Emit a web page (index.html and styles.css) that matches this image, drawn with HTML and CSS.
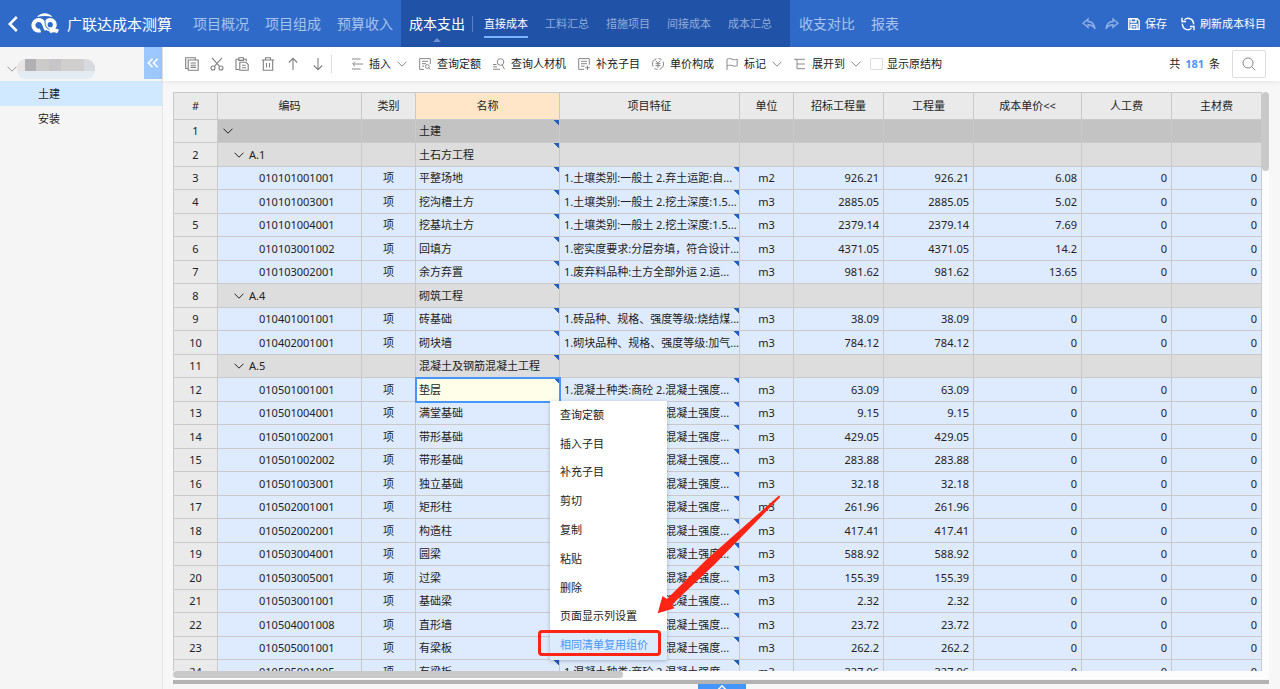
FILE: index.html
```html
<!DOCTYPE html>
<html lang="zh-CN">
<head>
<meta charset="utf-8">
<title>广联达成本测算</title>
<link rel="stylesheet" href="styles.css">
</head>
<body>
<svg class="defs" aria-hidden="true">
  <symbol id="i-down" viewBox="0 0 10 6"><path d="M.5.7 5 5.2 9.500.7"/></symbol>
  <symbol id="i-copy" viewBox="0 0 14 14"><path d="M3 11.500H.7V.7h9.600v1.800M3.200 3h10v10.300h-10zM5.500 6h5.500M5.500 8.200h5.500M5.500 10.400h5.500"/></symbol>
  <symbol id="i-cut" viewBox="0 0 14 14"><path d="M2 .8l8 9M12 .8l-8 9"/><circle cx="3" cy="11" r="2"/><circle cx="11" cy="11" r="2"/></symbol>
  <symbol id="i-paste" viewBox="0 0 14 14"><path d="M4 12.500H1V2.200h2.800M8.500 2.200h2.800v2M3.800.8h4.700v2.600H3.800zM4.800 5.200h6l2.400 2.300v5.800H4.800zM7 8.300h3.600M7 10.700h4"/></symbol>
  <symbol id="i-trash" viewBox="0 0 14 14"><path d="M.8 3h12.400M4.500 3V.8h5V3M2.300 3v10.200h9.400V3M5.500 6v4.500M8.500 6v4.500"/></symbol>
  <symbol id="i-up" viewBox="0 0 14 14"><path d="M7 13V1.500M2.800 5.500 7 1.300l4.200 4.200"/></symbol>
  <symbol id="i-dn" viewBox="0 0 14 14"><path d="M7 1v11.500M2.800 8.500 7 12.700l4.200-4.200"/></symbol>
  <symbol id="i-insert" viewBox="0 0 12 12"><path d="M1 1h8.500M5 6h7M1 11h8.500M5 6H2M4 3.700 1.700 6 4 8.300"/></symbol>
  <symbol id="i-list" viewBox="0 0 12 12"><path d="M5 11.400H.7V.6h10.600V6M3 3.300h6M3 5.700h4M3 8.100h2"/><circle cx="8.300" cy="8.500" r="1.900"/><path d="M9.700 9.900l1.800 1.800"/></symbol>
  <symbol id="i-person" viewBox="0 0 12 12"><circle cx="7.500" cy="4" r="3.300"/><path d="M9.200 7l2.300 4.300M0 6.500h3.500M0 8.900h4M0 11.300h7"/></symbol>
  <symbol id="i-add" viewBox="0 0 12 12"><path d="M6 11.400H.7V.6h10.600v6.200M3 3.300h6M3 5.700h6M3 8.100h3.500M9.500 7.500v4.500M7.200 9.700h4.600"/></symbol>
  <symbol id="i-yen" viewBox="0 0 12 12"><path d="M4.500.700A5.500 5.500 0 0 0 1 8.500M2.300 10.200A5.500 5.500 0 0 0 5.500 11.500M7.500 11.300A5.500 5.500 0 0 0 11 3.500M9.700 1.800A5.500 5.500 0 0 0 6.500.5M3.700 2.700 6 5.300l2.300-2.600M3.500 5.700h5M3.500 7.600h5M6 5.500V9.800"/></symbol>
  <symbol id="i-flag" viewBox="0 0 12 12"><path d="M1 12V1.300C3 .2 4.500.500 6 1.200s3 .8 5.200.1v6.400C9 8.400 7.500 8.200 6 7.600S3 7 1 8"/></symbol>
  <symbol id="i-tree" viewBox="0 0 12 12"><path d="M0 1.300h11M3 1.300v9.400h8M3 6h8"/></symbol>
  <symbol id="i-search" viewBox="0 0 14 14"><circle cx="6" cy="6" r="5"/><path d="M9.600 9.600l3.700 3.700"/></symbol>
  <symbol id="i-undo" viewBox="0 0 14 12"><path d="M6 1 1 5.200 6 9.300V6.800c3 0 5.300.9 7 4C12.500 6 10 3.700 6 3.500z"/></symbol>
  <symbol id="i-save" viewBox="0 0 12 12"><path d="M.8.8h8.400l2 2v8.400H.8zM3 .8v3.200h5V.8M3 11V6.500h6V11M4.500 8.700h3"/></symbol>
  <symbol id="i-refresh" viewBox="0 0 14 14"><path d="M3.500 2.800a5.400 5.400 0 0 1 9 4.600M10.500 11.200a5.400 5.400 0 0 1-9-4.600M1 .8v3.700h4M13 13.200V9.500H9"/></symbol>
</svg>

<div class="app">
<header class="topbar">
  <button class="back" aria-label="返回"><svg viewBox="0 0 10 16"><path d="M8.800 1 1.800 8l7 7"/></svg></button>
  <svg class="logo" viewBox="0 0 28 21" aria-hidden="true">
    <path class="fill" d="M6 4C10-.9 17.500-1 21.500 4 16.500 2.500 11 2.500 6 4z"/>
    <path d="M9.500 17.300A5.300 5.300 0 1 1 12.300 9.600C13.500 11.500 13.800 14 15.500 16.800"/>
    <circle cx="19.200" cy="11.700" r="4.600"/>
    <path d="M18.500 18.600C21.500 16.800 24 16.800 27 18.600"/>
    <path class="gap" d="M14.300 7.500C13.500 11 14.800 15.500 18.500 16.300"/>
  </svg>
  <h1>广联达成本测算</h1>
  <nav class="nav">
    <a href="#">项目概况</a><a href="#">项目组成</a><a href="#">预算收入</a>
    <div class="nav-open">
      <a class="current" href="#">成本支出</a>
      <div class="subnav"><a class="on" href="#">直接成本</a><a href="#">工料汇总</a><a href="#">措施项目</a><a href="#">间接成本</a><a href="#">成本汇总</a></div>
    </div>
    <a href="#">收支对比</a><a href="#">报表</a>
  </nav>
  <div class="actions">
    <button class="dim" aria-label="撤销"><svg class="ic14"><use href="#i-undo"/></svg></button>
    <button class="dim flip" aria-label="重做"><svg class="ic14"><use href="#i-undo"/></svg></button>
    <button><svg class="ic12"><use href="#i-save"/></svg>保存</button>
    <button class="refresh"><svg class="ic14"><use href="#i-refresh"/></svg>刷新成本科目</button>
  </div>
</header>

<div class="body">
  <aside class="side">
    <div class="side-head">
      <button class="project" aria-label="项目"><svg class="chev"><use href="#i-down"/></svg><span class="mosaic"></span></button>
      <button class="fold" aria-label="收起"><svg viewBox="0 0 12 10"><path d="M5.500.8 1.300 5l4.200 4.200M10.700.8 6.500 5l4.200 4.200"/></svg></button>
    </div>
    <a class="leaf on" href="#">土建</a>
    <a class="leaf" href="#">安装</a>
  </aside>

  <main class="main">
    <div class="toolbar">
      <div class="icons">
        <button aria-label="复制"><svg><use href="#i-copy"/></svg></button>
        <button aria-label="剪切"><svg><use href="#i-cut"/></svg></button>
        <button aria-label="粘贴"><svg><use href="#i-paste"/></svg></button>
        <button aria-label="删除"><svg><use href="#i-trash"/></svg></button>
        <button aria-label="上移"><svg><use href="#i-up"/></svg></button>
        <button aria-label="下移"><svg><use href="#i-dn"/></svg></button>
      </div>
      <div class="tools">
        <button><svg class="ic12"><use href="#i-insert"/></svg>插入<svg class="chev"><use href="#i-down"/></svg></button>
        <button><svg class="ic12"><use href="#i-list"/></svg>查询定额</button>
        <button><svg class="ic12"><use href="#i-person"/></svg>查询人材机</button>
        <button><svg class="ic12"><use href="#i-add"/></svg>补充子目</button>
        <button><svg class="ic12"><use href="#i-yen"/></svg>单价构成</button>
        <button><svg class="ic12"><use href="#i-flag"/></svg>标记<svg class="chev"><use href="#i-down"/></svg></button>
        <button><svg class="ic12"><use href="#i-tree"/></svg>展开到<svg class="chev"><use href="#i-down"/></svg></button>
        <label><input type="checkbox">显示原结构</label>
      </div>
      <p class="count">共 <b>181</b> 条</p>
      <button class="search" aria-label="搜索"><svg class="ic14"><use href="#i-search"/></svg></button>
    </div>

    <div class="sheet">
      <div class="viewport">
        <table class="grid">
          <colgroup><col class="c-no"><col class="c-name"><col class="c-unit"><col class="c-name"><col class="c-desc"><col class="c-unit"><col class="c-num"><col class="c-num"><col class="c-price"><col class="c-num"><col class="c-num"></colgroup>
          <thead><tr><th>#</th><th>编码</th><th>类别</th><th class="hot">名称</th><th>项目特征</th><th>单位</th><th>招标工程量</th><th>工程量</th><th>成本单价&lt;&lt;</th><th>人工费</th><th>主材费</th></tr></thead>
          <tbody>
          <tr class="top"><th>1<td><svg class="chev"><use href="#i-down"/></svg><td><td>土建<td><td><td><td><td><td><td></tr>
          <tr class="group"><th>2<td><svg class="chev"><use href="#i-down"/></svg>A.1<td><td>土石方工程<td><td><td><td><td><td><td></tr>
          <tr><th>3<td>010101001001<td>项<td>平整场地<td>1.土壤类别:一般土 2.弃土运距:自...<td>m2<td>926.21<td>926.21<td>6.08<td>0<td>0</tr>
          <tr><th>4<td>010101003001<td>项<td>挖沟槽土方<td>1.土壤类别:一般土 2.挖土深度:1.5...<td>m3<td>2885.05<td>2885.05<td>5.02<td>0<td>0</tr>
          <tr><th>5<td>010101004001<td>项<td>挖基坑土方<td>1.土壤类别:一般土 2.挖土深度:1.5...<td>m3<td>2379.14<td>2379.14<td>7.69<td>0<td>0</tr>
          <tr><th>6<td>010103001002<td>项<td>回填方<td>1.密实度要求:分层夯填，符合设计...<td>m3<td>4371.05<td>4371.05<td>14.2<td>0<td>0</tr>
          <tr><th>7<td>010103002001<td>项<td>余方弃置<td>1.废弃料品种:土方全部外运 2.运...<td>m3<td>981.62<td>981.62<td>13.65<td>0<td>0</tr>
          <tr class="group"><th>8<td><svg class="chev"><use href="#i-down"/></svg>A.4<td><td>砌筑工程<td><td><td><td><td><td><td></tr>
          <tr><th>9<td>010401001001<td>项<td>砖基础<td>1.砖品种、规格、强度等级:烧结煤...<td>m3<td>38.09<td>38.09<td>0<td>0<td>0</tr>
          <tr><th>10<td>010402001001<td>项<td>砌块墙<td>1.砌块品种、规格、强度等级:加气...<td>m3<td>784.12<td>784.12<td>0<td>0<td>0</tr>
          <tr class="group"><th>11<td><svg class="chev"><use href="#i-down"/></svg>A.5<td><td>混凝土及钢筋混凝土工程<td><td><td><td><td><td><td></tr>
          <tr><th>12<td>010501001001<td>项<td class="editing">垫层<td>1.混凝土种类:商砼 2.混凝土强度...<td>m3<td>63.09<td>63.09<td>0<td>0<td>0</tr>
          <tr><th>13<td>010501004001<td>项<td>满堂基础<td>1.混凝土种类:商砼 2.混凝土强度...<td>m3<td>9.15<td>9.15<td>0<td>0<td>0</tr>
          <tr><th>14<td>010501002001<td>项<td>带形基础<td>1.混凝土种类:商砼 2.混凝土强度...<td>m3<td>429.05<td>429.05<td>0<td>0<td>0</tr>
          <tr><th>15<td>010501002002<td>项<td>带形基础<td>1.混凝土种类:商砼 2.混凝土强度...<td>m3<td>283.88<td>283.88<td>0<td>0<td>0</tr>
          <tr><th>16<td>010501003001<td>项<td>独立基础<td>1.混凝土种类:商砼 2.混凝土强度...<td>m3<td>32.18<td>32.18<td>0<td>0<td>0</tr>
          <tr><th>17<td>010502001001<td>项<td>矩形柱<td>1.混凝土种类:商砼 2.混凝土强度...<td>m3<td>261.96<td>261.96<td>0<td>0<td>0</tr>
          <tr><th>18<td>010502002001<td>项<td>构造柱<td>1.混凝土种类:商砼 2.混凝土强度...<td>m3<td>417.41<td>417.41<td>0<td>0<td>0</tr>
          <tr><th>19<td>010503004001<td>项<td>圆梁<td>1.混凝土种类:商砼 2.混凝土强度...<td>m3<td>588.92<td>588.92<td>0<td>0<td>0</tr>
          <tr><th>20<td>010503005001<td>项<td>过梁<td>1.混凝土种类:商砼 2.混凝土强度...<td>m3<td>155.39<td>155.39<td>0<td>0<td>0</tr>
          <tr><th>21<td>010503001001<td>项<td>基础梁<td>1.混凝土种类:商砼 2.混凝土强度...<td>m3<td>2.32<td>2.32<td>0<td>0<td>0</tr>
          <tr><th>22<td>010504001008<td>项<td>直形墙<td>1.混凝土种类:商砼 2.混凝土强度...<td>m3<td>23.72<td>23.72<td>0<td>0<td>0</tr>
          <tr><th>23<td>010505001001<td>项<td>有梁板<td>1.混凝土种类:商砼 2.混凝土强度...<td>m3<td>262.2<td>262.2<td>0<td>0<td>0</tr>
          <tr><th>24<td>010505001005<td>项<td>有梁板<td>1.混凝土种类:商砼 2.混凝土强度...<td>m3<td>327.96<td>327.96<td>0<td>0<td>0</tr>
          </tbody>
        </table>
      </div>
      <div class="vbar"><i></i></div>
      <div class="hbar"><i></i></div>
    </div>
    <div class="splitter"></div>
    <button class="drawer" aria-label="展开"><svg class="chev"><use href="#i-down"/></svg></button>
  </main>
</div>

<div class="menu" role="menu">
  <button role="menuitem">查询定额</button>
  <button role="menuitem">插入子目</button>
  <button role="menuitem">补充子目</button>
  <button role="menuitem">剪切</button>
  <button role="menuitem">复制</button>
  <button role="menuitem">粘贴</button>
  <button role="menuitem">删除</button>
  <button role="menuitem">页面显示列设置</button>
  <button role="menuitem" class="on">相同清单复用组价</button>
</div>
<div class="mark-box"></div>
<svg class="mark-arrow" viewBox="0 0 124 120" aria-hidden="true"><path d="M.7 119.300 5.500 102l4.500 3L49 66 121.500 2a1 1 0 0 1 1.500 1.200L57 71 15 110.500l2.500 3.800z"/></svg>
</div>
</body>
</html>
```

FILE: styles.css
```css
* { box-sizing: border-box; }
body {
  margin: 0;
  font: 11px/16px "Noto Sans", "Noto Sans CJK SC", sans-serif;
  color: #222;
  background: #f7f7f7;
}
button { font: inherit; color: inherit; background: none; border: 0; padding: 0; }
a { color: inherit; text-decoration: none; }
svg { display: block; fill: none; stroke: currentColor; flex: none; }
.defs { position: absolute; width: 0; height: 0; }
.ic12 { width: 12px; height: 12px; }
.ic14 { width: 14px; height: 14px; }
.chev { width: 10px; height: 6px; }

.app { position: relative; display: flex; flex-direction: column; height: 100vh; overflow: hidden; }

/* top bar */
.topbar { display: flex; align-items: center; flex: none; height: 47px; padding: 0 14px 0 8px; background: #306ac9; color: #fff; }
.back svg { width: 10px; height: 16px; stroke-width: 2.5; }
.logo { width: 28px; height: 21px; margin-left: 13px; stroke-width: 4; }
.logo .fill { fill: #fff; stroke: none; }
.logo .gap { stroke: #306ac9; stroke-width: 1; }
h1 { margin: 0 0 0 8px; font-size: 15px; font-weight: 400; line-height: 24px; white-space: nowrap; }
.nav { display: flex; align-items: center; align-self: stretch; margin-left: 13px; font-size: 14px; white-space: nowrap; color: #a7c2eb; }
.nav > a { padding: 0 8px; }
.nav-open { display: flex; align-items: center; align-self: stretch; margin-right: 1px; padding: 0 18px 0 8px; background: #2052a7; }
.current { position: relative; color: #fff; padding-right: 7px; }
.current::after { content: ""; position: absolute; left: 24px; top: 22px; border: 4px solid transparent; border-top: 0; border-bottom-color: #6f93cf; }
.subnav { display: flex; gap: 17px; padding-left: 11px; border-left: 1px solid #5b82c2; font-size: 11px; color: #92addb; }
.subnav a { position: relative; }
.subnav .on { color: #fff; }
.subnav .on::after { content: ""; position: absolute; left: 0; right: 0; top: 20px; height: 2px; background: #79b5ff; }
.actions { display: flex; align-items: center; gap: 9px; margin-left: auto; }
.actions button { display: flex; align-items: center; gap: 5px; white-space: nowrap; }
.actions .dim { color: #8fb0e5; }
.actions .flip { transform: scaleX(-1); }
.actions .refresh { margin-left: 5px; }
.actions svg { stroke-width: 1.4; }

/* side tree */
.body { display: flex; flex: 1; min-height: 0; }
.side { width: 163px; flex: none; background: #f5f5f5; border-right: 1px solid #e4e4e4; }
.side-head { display: flex; justify-content: space-between; height: 34px; }
.project { display: flex; align-items: center; padding: 10px 0 0 7px; color: #999; }
.mosaic {
  width: 78px; height: 20px; border-radius: 9px;
  background:
    linear-gradient(#0000 60%, #e3ebf3 60%),
    linear-gradient(90deg, #e8e4e3 10%, #b0b0b3 10% 25%, #cccbc9 25% 41%, #c8c5c9 41% 56%, #d0cfce 56% 86%, #d7dade 86%);
}
.fold { display: flex; align-items: center; justify-content: center; width: 18px; height: 32px; background: #9cc8ff; color: #fff; }
.fold svg { width: 12px; height: 10px; stroke-width: 1.6; }
.leaf { display: block; padding-left: 38px; line-height: 25px; }
.leaf.on { background: #d1e9ff; }

/* toolbar */
.main { display: flex; flex-direction: column; flex: 1; min-width: 0; }
.toolbar { display: flex; align-items: center; flex: none; height: 34px; padding: 0 14px 0 22px; background: #fff; box-shadow: 0 1px 5px rgba(0, 0, 0, .08); white-space: nowrap; }
.icons { display: flex; justify-content: space-between; align-items: center; width: 147px; height: 18px; padding-right: 6px; border-right: 1px solid #ddd; color: #808080; }
.icons svg { width: 14px; height: 14px; stroke-width: 1.1; }
.tools { display: flex; gap: 12px; margin-left: 19px; }
.tools button, .tools label { display: flex; align-items: center; gap: 6px; }
.tools svg { color: #888; }
.tools label { gap: 4px; margin-left: -3px; }
.tools input { appearance: none; width: 13px; height: 12px; margin: 0; border: 1px solid #ddd; border-radius: 1px; background: #fff; }
.count { margin: 0 12px 0 auto; }
.count b { margin: 0 2px; color: #4797f7; }
.search { display: flex; align-items: center; justify-content: center; width: 34px; height: 28px; border: 1px solid #ddd; border-radius: 2px; color: #888; }

/* data grid */
.sheet { display: grid; grid-template: minmax(0, 1fr) 8px / minmax(0, 1fr) 7px; flex: 1; min-height: 0; margin: 11px 11px 0 10px; background: #fcfcfc; }
.viewport { overflow: hidden; }
.grid { width: 100%; table-layout: fixed; border-spacing: 0; border: solid #c9c9c9; border-width: 1px 0 0 1px; }
.c-no { width: 44px; }
.c-name { width: 144px; }
.c-unit { width: 54px; }
.c-desc { width: 180px; }
.c-num { width: 90px; }
.c-price { width: 108px; }
.grid th, .grid td { height: 24px; padding: 0 4px; border: solid #c9c9c9; border-width: 0 1px 1px 0; font-weight: 400; white-space: nowrap; overflow: hidden; }
.grid tbody tr:nth-child(odd) > * { height: 23px; }
.grid th { background: #eaeaea; text-align: center; }
.grid thead th { height: 27px; }
.grid .hot { background: #ffe6c9; }
.grid td { background-color: #deeafe; text-align: right; }
.grid td:nth-child(2) { padding-left: 41px; text-align: left; }
.grid td:nth-child(3), .grid td:nth-child(6) { text-align: center; }
.grid td:nth-child(4), .grid td:nth-child(5) { padding: 0 0 0 4px; text-align: left; background-repeat: no-repeat; background-position: right top; background-size: 6px 5px; }
.grid td:nth-child(4) { padding-left: 3px; }
.grid td:nth-child(4), .grid tr:not(.top, .group) td:nth-child(5) { background-image: linear-gradient(to bottom left, #2460c0 50%, transparent 50%); }
.grid .top td { background-color: #c3c3c3; }
.grid .group td { background-color: #ddd; }
.grid .group .chev, .grid .top .chev { display: inline-block; vertical-align: middle; margin: -2px 5px 0 0; }
.grid .top td:nth-child(2) { padding-left: 5px; }
.grid .group td:nth-child(2) { padding-left: 16px; }
.grid td.editing { background-color: #ffffe9; outline: 2px solid #4496fb; outline-offset: -1px; }
.vbar i { display: block; height: 79px; border-radius: 4px; background: #c9c9c9; }
.hbar i { display: block; width: 450px; max-width: 100%; height: 7px; border-radius: 4px; background: #c9c9c9; }
.splitter { flex: none; height: 4px; margin: 1px 11px 0 10px; background: #b3b3b3; }
.drawer { flex: none; align-self: center; width: 48px; height: 5px; overflow: hidden; background: #4496fb; color: #fff; }
.drawer .chev { margin: 1px auto 0; transform: scaleY(-1); stroke-width: 1.5; }

/* context menu and annotation, floating over the grid */
.menu { position: absolute; left: 550px; top: 401px; display: flex; flex-direction: column; width: 117px; height: 259px; background: #fff; box-shadow: 0 1px 4px rgba(0, 0, 0, .25); }
.menu button { flex: 1; min-height: 0; padding: 0 0 1px 10px; text-align: left; }
.menu .on { background: #dcecfd; color: #4797f7; }
.mark-box { position: absolute; left: 538px; top: 630px; width: 123px; height: 26px; border: 3px solid #ff2414; border-radius: 4px; }
.mark-arrow { position: absolute; left: 657px; top: 494px; width: 124px; height: 120px; fill: #ff2414; stroke: none; }
```
